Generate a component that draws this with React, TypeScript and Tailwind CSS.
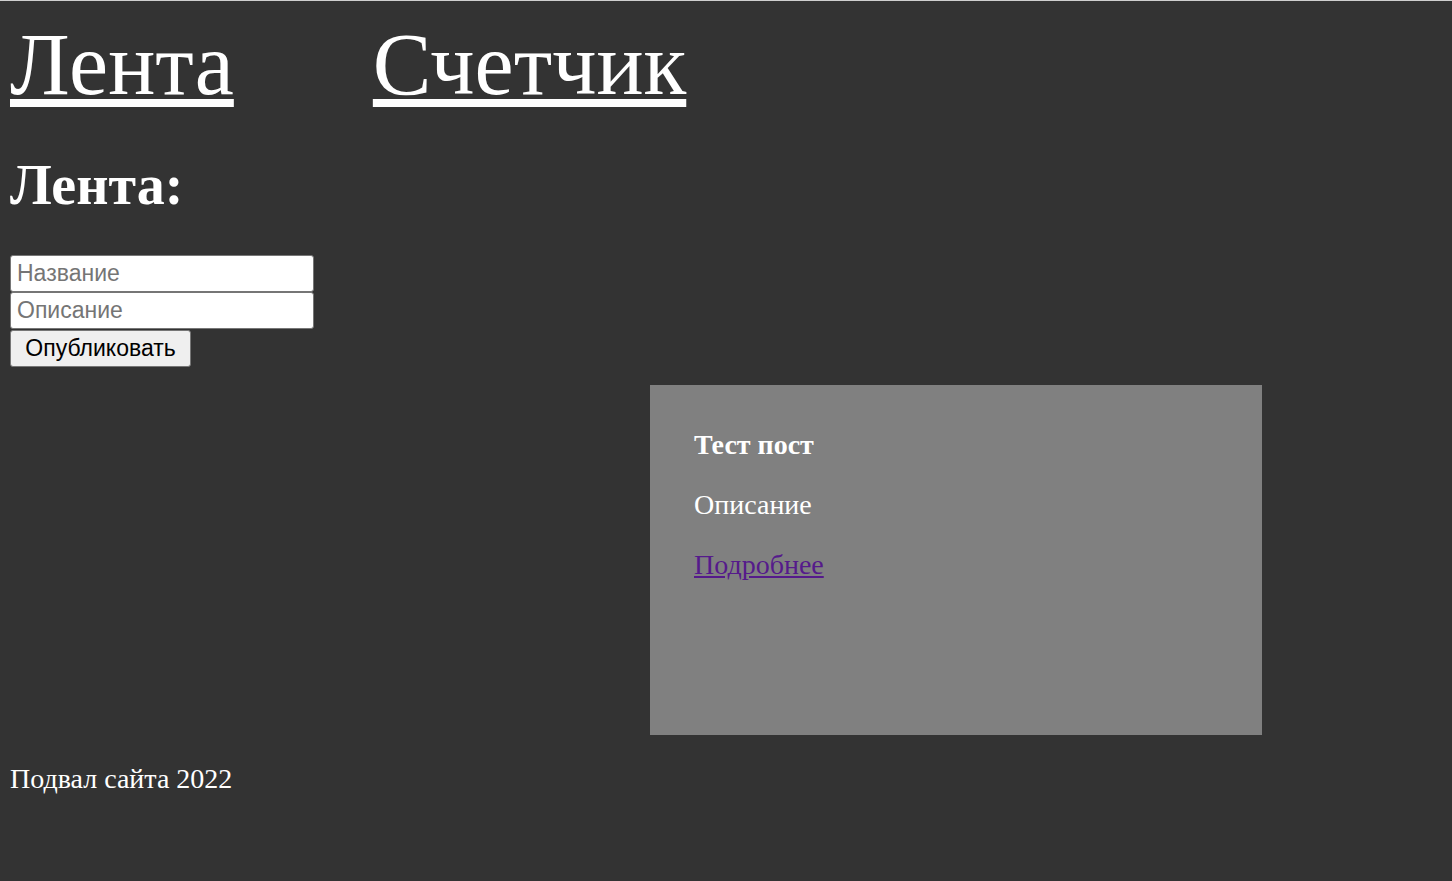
import React from "react";

export default function App() {
  const serif = { fontFamily: '"Liberation Serif", "Times New Roman", serif' };
  const sans = { fontFamily: '"Liberation Sans", Arial, sans-serif' };
  return (
    <div
      className="min-h-[881px] bg-[#333333] border-t border-[#cfcfcf] text-white px-[10px]"
      style={serif}
    >
      <nav className="flex gap-[139px] pt-[13px]">
        <a href="#" className="text-[88px] leading-[101px] underline text-white">
          Лента
        </a>
        <a href="#" className="text-[88px] leading-[101px] underline text-white">
          Счетчик
        </a>
      </nav>
      <h1 className="text-[56px] leading-[64px] font-bold mt-[38px] mb-[38px]">Лента:</h1>
      <form className="flex flex-col items-start" style={sans}>
        <input
          placeholder="Название"
          className="w-[304px] h-[37px] bg-white border border-[#767676] rounded-[3px] px-[6px] text-[23px] text-black placeholder:text-[#757575] outline-none"
        />
        <input
          placeholder="Описание"
          className="w-[304px] h-[37px] bg-white border border-[#767676] rounded-[3px] px-[6px] text-[23px] text-black placeholder:text-[#757575] outline-none"
        />
        <button
          type="button"
          className="mt-[1px] w-[181px] h-[37px] bg-[#efefef] border border-[#767676] rounded-[3px] text-[23px] text-black"
        >
          Опубликовать
        </button>
      </form>
      <div className="ml-[640px] mt-[18px] w-[612px] h-[350px] bg-[#808080] px-[44px] pt-[44px]">
        <h4 className="text-[28px] leading-[32px] font-bold">Тест пост</h4>
        <p className="text-[28px] leading-[32px] mt-[28px]">Описание</p>
        <a href="#" className="block mt-[28px] text-[28px] leading-[32px] underline text-[#551a8b] w-fit">
          Подробнее
        </a>
      </div>
      <footer className="mt-[28px] text-[28px] leading-[32px]">Подвал сайта 2022</footer>
    </div>
  );
}
